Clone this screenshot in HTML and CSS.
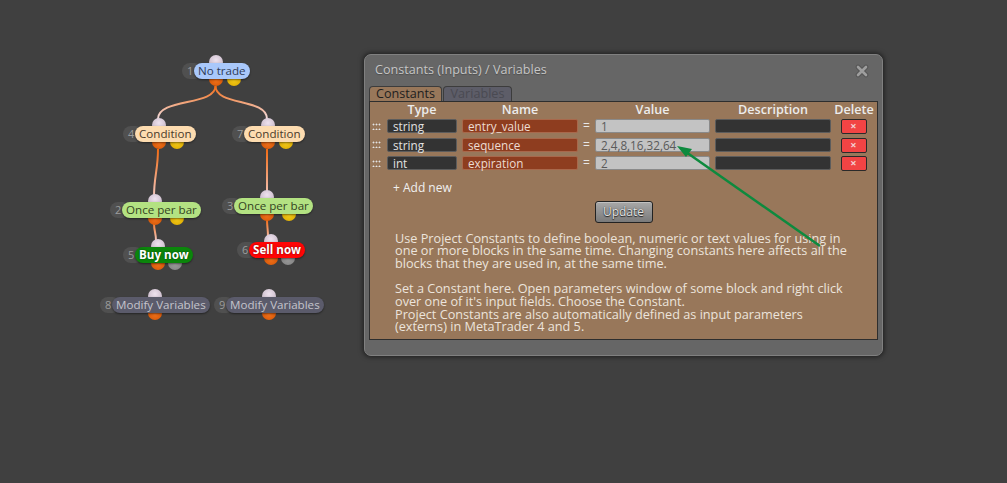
FILE: index.html
```html
<!DOCTYPE html>
<html>
<head>
<meta charset="utf-8">
<title>Constants</title>
<link rel="stylesheet" href="styles.css">
</head>
<body>
<div class="desk">
  <svg class="wires" width="1007" height="483" viewBox="0 0 1007 483">
    <defs>
      <linearGradient id="w1" gradientUnits="userSpaceOnUse" x1="0" y1="86" x2="0" y2="119">
        <stop offset="0" stop-color="#f26a12"/><stop offset="1" stop-color="#f2dde0"/>
      </linearGradient>
      <linearGradient id="w2" gradientUnits="userSpaceOnUse" x1="0" y1="149" x2="0" y2="197">
        <stop offset="0" stop-color="#f26a12"/><stop offset="1" stop-color="#f2c8c0"/>
      </linearGradient>
      <linearGradient id="w3" gradientUnits="userSpaceOnUse" x1="0" y1="219" x2="0" y2="241">
        <stop offset="0" stop-color="#f26a12"/><stop offset="1" stop-color="#f2c8c0"/>
      </linearGradient>
    </defs>
    <path d="M215.5 86 C215.5 106 158 98 158 119" class="wire" stroke="url(#w1)"/>
    <path d="M215.5 86 C215.5 106 267 98 267 119" class="wire" stroke="url(#w1)"/>
    <path d="M158 149 C158 170 154 176 154 197" class="wire" stroke="url(#w2)"/>
    <path d="M267 149 L267 193" class="wire" stroke="url(#w2)"/>
    <path d="M154 223 C154 232 156 232 156 241" class="wire" stroke="url(#w3)"/>
    <path d="M267 219 C267 228 268 228 268 237" class="wire" stroke="url(#w3)"/>
  </svg>

  <div class="node" style="left:182px;top:63px">
    <span class="port in"></span>
    <span class="num">1</span><span class="label blue">No trade</span>
    <span class="port out"></span><span class="port yes"></span>
  </div>
  <div class="node" style="left:123px;top:126px">
    <span class="port in"></span>
    <span class="num">4</span><span class="label peach">Condition</span>
    <span class="port out"></span><span class="port yes"></span>
  </div>
  <div class="node" style="left:232px;top:126px">
    <span class="port in"></span>
    <span class="num">7</span><span class="label peach">Condition</span>
    <span class="port out"></span><span class="port yes"></span>
  </div>
  <div class="node" style="left:110px;top:202px">
    <span class="port in"></span>
    <span class="num">2</span><span class="label green">Once per bar</span>
    <span class="port out"></span><span class="port yes wide"></span>
  </div>
  <div class="node" style="left:222px;top:198px">
    <span class="port in"></span>
    <span class="num">3</span><span class="label green">Once per bar</span>
    <span class="port out"></span><span class="port yes wide"></span>
  </div>
  <div class="node" style="left:123px;top:247px">
    <span class="port in"></span>
    <span class="num">5</span><span class="label buy">Buy now</span>
    <span class="port out"></span><span class="port grey"></span>
  </div>
  <div class="node" style="left:237px;top:242px">
    <span class="port in"></span>
    <span class="num">6</span><span class="label sell">Sell now</span>
    <span class="port out"></span><span class="port grey"></span>
  </div>
  <div class="node" style="left:100px;top:297px">
    <span class="port in"></span>
    <span class="num">8</span><span class="label slate">Modify Variables</span>
    <span class="port out"></span>
  </div>
  <div class="node" style="left:214px;top:297px">
    <span class="port in"></span>
    <span class="num">9</span><span class="label slate">Modify Variables</span>
    <span class="port out"></span>
  </div>

  <div class="dialog">
    <div class="dlg-head">
      <span class="dlg-title">Constants (Inputs) / Variables</span>
      <svg class="dlg-close" width="14" height="14" viewBox="0 0 14 14">
        <path d="M3 3 L11 11 M11 3 L3 11" stroke="#555" stroke-width="4.6" stroke-linecap="round"/>
        <path d="M3 3 L11 11 M11 3 L3 11" stroke="#9e9e9e" stroke-width="2.6" stroke-linecap="round"/>
      </svg>
    </div>
    <div class="tabs">
      <span class="tab active">Constants</span>
      <span class="tab">Variables</span>
    </div>
    <div class="panel">
      <div class="grid">
        <span></span>
        <span class="th pr">Type</span>
        <span class="th">Name</span>
        <span></span>
        <span class="th pr">Value</span>
        <span class="th">Description</span>
        <span class="th">Delete</span>

        <span class="grip"></span>
        <span class="pr"><span class="field type">string</span></span>
        <span><span class="field name">entry_value</span></span>
        <span class="eq">=</span>
        <span class="pr"><span class="field value">1</span></span>
        <span><span class="field desc"></span></span>
        <span class="delcell"><span class="del">×</span></span>

        <span class="grip"></span>
        <span class="pr"><span class="field type">string</span></span>
        <span><span class="field name">sequence</span></span>
        <span class="eq">=</span>
        <span class="pr"><span class="field value">2,4,8,16,32,64</span></span>
        <span><span class="field desc"></span></span>
        <span class="delcell"><span class="del">×</span></span>

        <span class="grip"></span>
        <span class="pr"><span class="field type">int</span></span>
        <span><span class="field name">expiration</span></span>
        <span class="eq">=</span>
        <span class="pr"><span class="field value">2</span></span>
        <span><span class="field desc"></span></span>
        <span class="delcell"><span class="del">×</span></span>
      </div>
      <div class="addnew">+ Add new</div>
      <div class="btnrow"><span class="btn">Update</span></div>
      <div class="help">
        <p>Use Project Constants to define boolean, numeric or text values for using in one or more blocks in the same time. Changing constants here affects all the blocks that they are used in, at the same time.</p>
        <p>Set a Constant here. Open parameters window of some block and right click over one of it's input fields. Choose the Constant.<br>Project Constants are also automatically defined as input parameters (externs) in MetaTrader 4 and 5.</p>
      </div>
    </div>
  </div>

  <svg class="arrow" width="1007" height="483" viewBox="0 0 1007 483">
    <line x1="820" y1="246" x2="686" y2="152" stroke="#0d8a3e" stroke-width="2.5"/>
    <path d="M677 146 L692 149 L686 157 Z" fill="#0d8a3e"/>
  </svg>
</div>
</body>
</html>
```
FILE: styles.css
```css
* { box-sizing: border-box; }
html, body { margin: 0; padding: 0; }
body {
  background: #404040;
  font-family: "Open Sans", "Noto Sans", sans-serif;
  width: 1007px;
  height: 483px;
  overflow: hidden;
}
.desk {
  position: relative;
  width: 1007px;
  height: 483px;
}
.wires, .arrow {
  position: absolute;
  left: 0;
  top: 0;
  pointer-events: none;
}
.arrow { z-index: 20; }
.wire { fill: none; stroke-width: 2; }

/* graph nodes */
.node {
  position: absolute;
  display: flex;
  align-items: center;
  height: 16px;
}
.num {
  position: relative;
  z-index: 2;
  width: 20px;
  height: 16px;
  border-radius: 8px;
  background: #505050;
  color: #9c9c9c;
  font-size: 11px;
  line-height: 16px;
  padding-left: 5px;
}
.label {
  position: relative;
  z-index: 3;
  margin-left: -8px;
  height: 16px;
  border-radius: 8px;
  padding: 0 4px;
  font-size: 11.6px;
  line-height: 16px;
  color: #3a3a3a;
  white-space: nowrap;
  box-shadow: 0 1px 2px rgba(0,0,0,0.45);
}
.label.blue { background: #a9c8fb; color: #2f3c58; }
.label.peach { background: #fddcb0; color: #4a3a2a; }
.label.green { background: #b3e282; color: #334422; }
.label.buy { background: #0b860b; color: #fff; font-weight: 700; text-shadow: 0 0 2px rgba(0,0,0,0.6); }
.label.sell { background: #ff0505; color: #fff; font-weight: 700; text-shadow: 0 0 2px rgba(0,0,0,0.6); }
.label.slate { background: #5b5b6b; color: #c4c4cc; }

.port {
  position: absolute;
  z-index: 1;
  width: 14px;
  height: 14px;
  border-radius: 50%;
  left: calc(50% - 7px);
}
.port.in {
  top: -8px;
  background: radial-gradient(circle at 50% 35%, #eee2ee 0%, #cbbccb 70%, #a898a8 100%);
}
.port.out {
  bottom: -7px;
  background: radial-gradient(circle at 50% 60%, #f0701a 0%, #d65808 70%, #b04600 100%);
}
.port.yes {
  bottom: -7px;
  left: calc(50% + 11px);
  background: radial-gradient(circle at 50% 60%, #f2c818 0%, #dcaa00 75%, #b08800 100%);
}
.port.yes.wide { left: calc(50% + 15px); }
.port.grey {
  bottom: -7px;
  left: calc(50% + 10px);
  background: radial-gradient(circle at 50% 60%, #9a9a9a 0%, #828282 75%, #666 100%);
}

/* dialog window */
.dialog {
  position: absolute;
  left: 364px;
  top: 54px;
  width: 519px;
  height: 302px;
  background: #666666;
  border: 1px solid #808080;
  border-radius: 7px;
  box-shadow: 0 0 5px 1px rgba(0,0,0,0.55);
  z-index: 10;
}
.dlg-head {
  display: flex;
  align-items: center;
  justify-content: space-between;
  height: 31px;
  padding: 0 13px 3px 10px;
}
.dlg-title {
  color: #c6c6c6;
  font-size: 12.6px;
  text-shadow: 0 1px 1px rgba(0,0,0,0.25);
}
.dlg-close { display: block; margin-top: 4px; }

.tabs {
  display: flex;
  margin: 0 4px;
  height: 15px;
  align-items: flex-end;
}
.tab {
  height: 15px;
  border: 1px solid #3c3c3c;
  border-bottom: none;
  border-radius: 4px 4px 0 0;
  font-size: 12.6px;
  line-height: 14px;
  text-align: center;
  color: #4a4a52;
  background: #5d5d68;
  margin-right: 1px;
  width: 69px;
}
.tab.active {
  background: #98775a;
  color: #1e1e1e;
  width: 73px;
}

.panel {
  margin: 0 4px;
  height: 239px;
  background: #98775a;
  border: 1px solid #2e2e2e;
}

.grid {
  display: grid;
  grid-template-columns: 17px 75px 116px 17px 120px 116px 1fr;
  grid-template-rows: 12.5px 14px 14px 14px;
  row-gap: 4.5px;
  align-items: center;
}
.pr { padding-right: 5px; }
.th {
  align-self: start;
  text-align: center;
  color: #ececec;
  font-size: 12.6px;
  font-weight: 600;
  height: 16px;
  line-height: 16px;
}
.grip {
  justify-self: start;
  margin-left: 2px;
  width: 9px;
  height: 7px;
  background-image: radial-gradient(circle, #e4e4e4 0, #e4e4e4 0.7px, transparent 1.2px);
  background-size: 3px 5px;
  background-position: 0 -1px;
}
.field {
  display: block;
  height: 14px;
  border-radius: 2px;
  font-size: 11.7px;
  line-height: 12px;
  padding-left: 5px;
  white-space: nowrap;
}
.field.type { background: #333; border: 1px solid #5c5c5c; color: #e2e2e2; }
.field.name { background: #8e3d1f; border: 1px solid #a9684b; color: #ecdcd2; }
.field.value { background: #c3c3c3; border: 1px solid #8a8a8a; color: #5a5a5a; }
.field.desc { background: #333; border: 1px solid #5c5c5c; }
.eq {
  text-align: center;
  color: #e8e8e8;
  font-size: 12px;
  line-height: 14px;
}
.delcell { display: flex; justify-content: center; padding-right: 1px; }
.del {
  width: 26px;
  height: 15px;
  margin-top: 1px;
  background: #f24444;
  border: 1px solid #2a2a2a;
  border-radius: 2px;
  color: #f4d0d0;
  font-size: 11px;
  line-height: 12px;
  text-align: center;
  font-weight: 700;
}

.addnew {
  margin: 11px 0 0 23px;
  font-size: 12px;
  line-height: 14px;
  color: #f0f0f0;
}
.btnrow {
  display: flex;
  justify-content: center;
  margin-top: 6px;
}
.btn {
  width: 58px;
  height: 22px;
  border: 1px solid #222;
  border-radius: 3px;
  background: linear-gradient(#a8a8a8, #7a7a7a);
  color: #e4e4e4;
  font-size: 12px;
  line-height: 20px;
  text-align: center;
  text-shadow: 0 1px 1px #222, 0 0 1px #222;
  box-shadow: inset 0 1px 0 rgba(255,255,255,0.3);
}
.help {
  padding: 8.5px 25px 0 25px;
  color: #ece4dc;
  font-size: 12.7px;
  line-height: 12.7px;
}
.help p { margin: 0 0 12.7px 0; }
```
